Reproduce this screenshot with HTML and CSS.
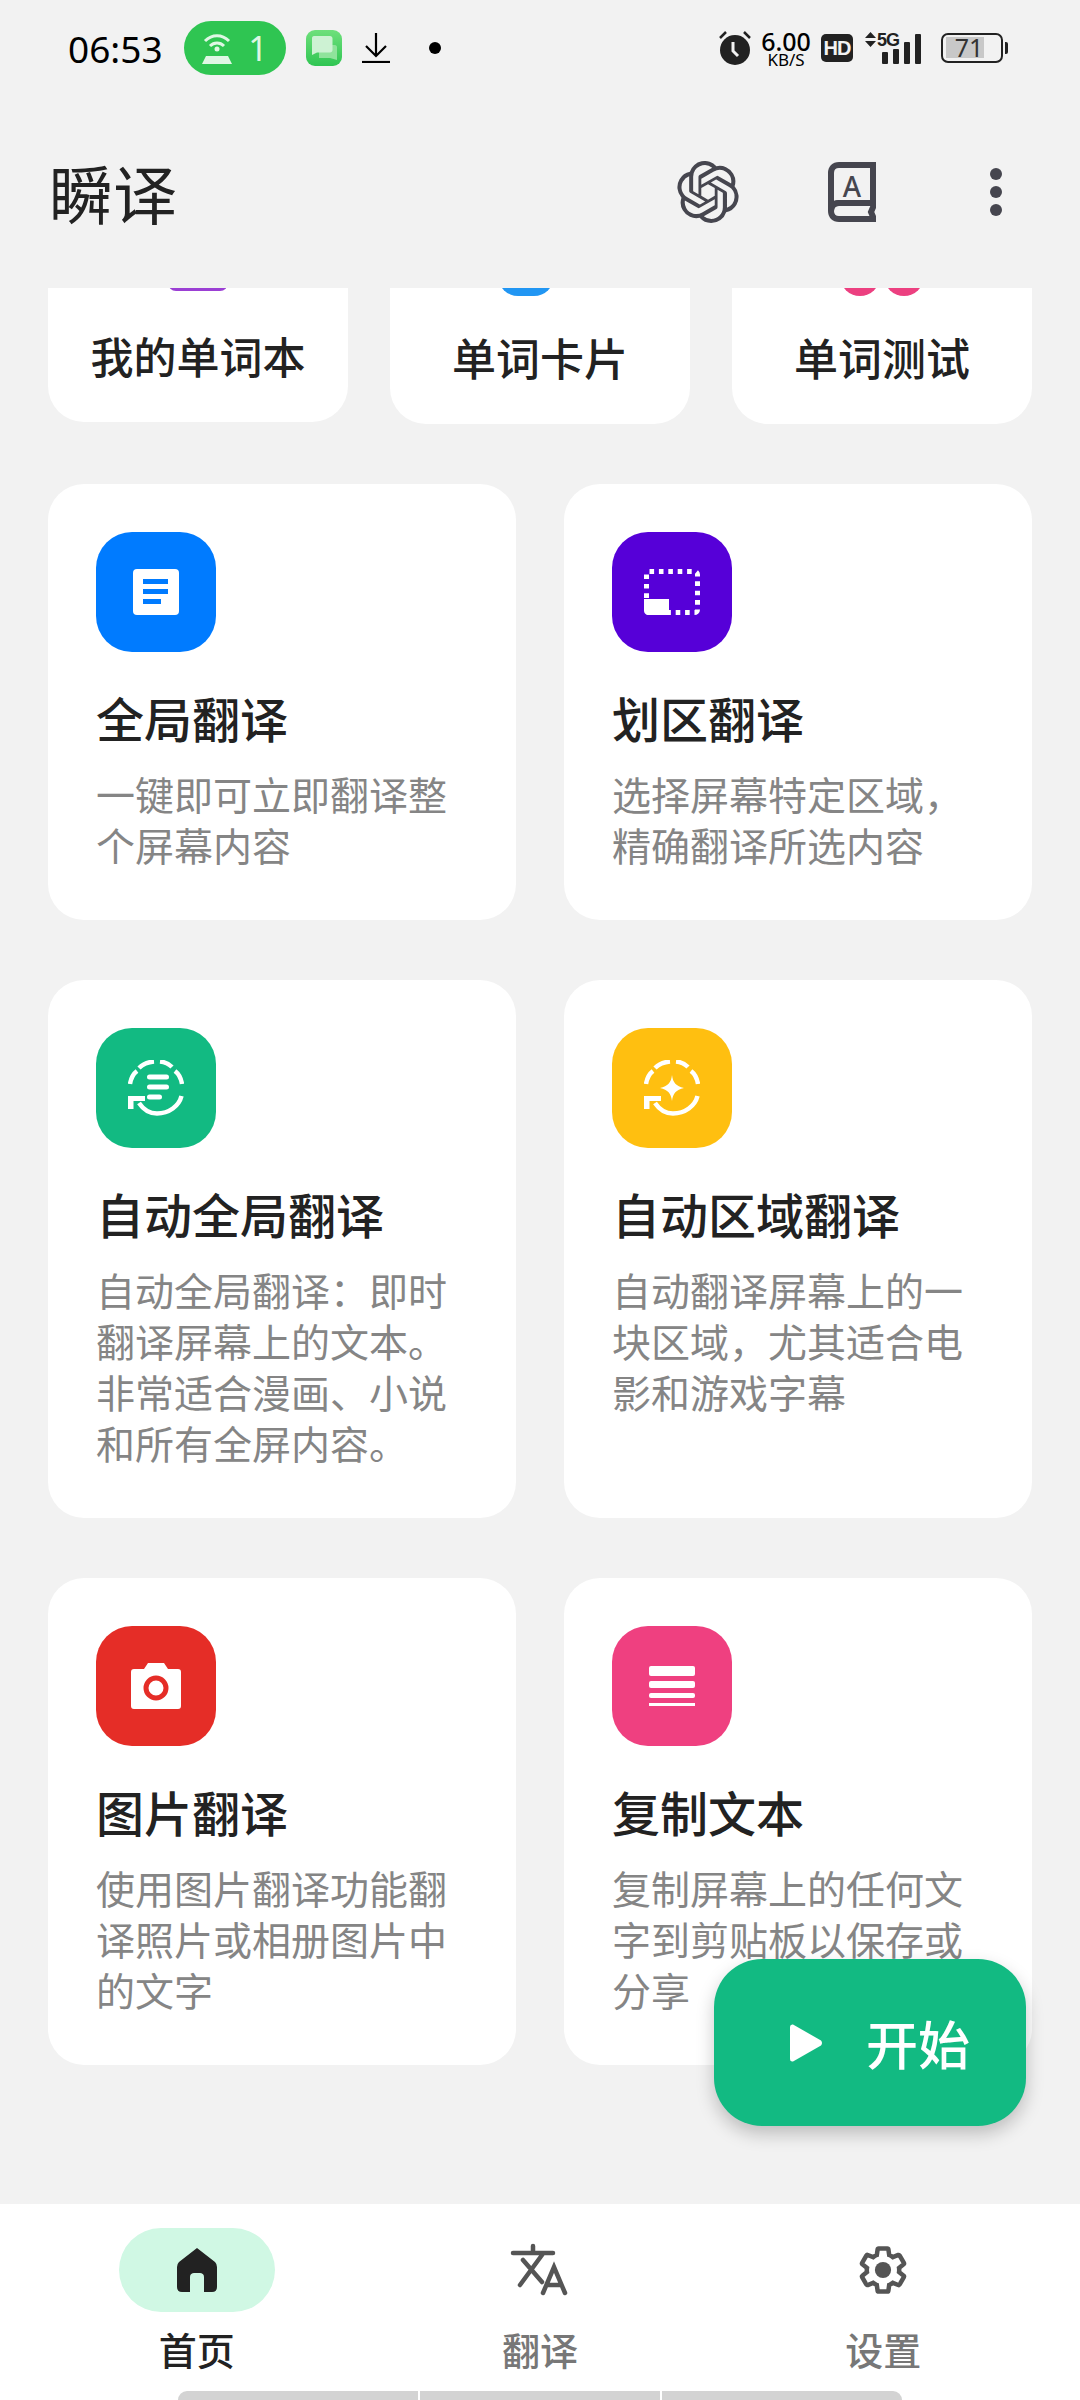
FILE: index.html
```html
<!DOCTYPE html>
<html lang="zh-CN">
<head>
  <meta charset="UTF-8" />
  <title>瞬译</title>
  <link rel="stylesheet" href="styles.css">
</head>
<body>
  <svg class="defs" width="0" height="0">
    <linearGradient id="chatBg" x1="0" y1="0" x2="0" y2="1">
      <stop offset="0" stop-color="#6fe07c"/>
      <stop offset="1" stop-color="#2fc552"/>
    </linearGradient>
    <symbol id="sync" viewBox="0 0 56 56">
      <g fill="none" stroke="#fff" stroke-width="4.500">
        <path d="M2 24C3 18 5 14 9 11"/>
        <path d="M11 8C15 4 20 2 26 1.500"/>
        <path d="M32 1.500C37 2 41 4 44 7"/>
        <path d="M47 11C51 14 53 18 54 24"/>
        <path d="M53.500 36C51 46 41 53.500 29 53.500C21 53.500 15 49 11 43"/>
      </g>
      <path d="M0 36H17V41H5.500V49H0Z" fill="#fff"/>
    </symbol>
  </svg>

  <div class="phone">
    <div class="status">
      <span class="time">06:53</span>
      <span class="hotspot">
        <svg width="30" height="31" viewBox="0 0 30 31"><g fill="none" stroke="#dff7e4" stroke-width="3"><path d="M3 8C10 1 20 1 27 8"/><path d="M8 13C12 9 18 9 22 13"/></g><circle cx="15" cy="16" r="2.500" fill="#dff7e4"/><path d="M0 31L4 23H26L30 31Z" fill="#dff7e4"/></svg>
        <span>1</span>
      </span>
      <svg class="st-chat" width="36" height="36" viewBox="0 0 36 36"><rect width="36" height="36" rx="9" fill="url(#chatBg)"/><path d="M13 15H29C30 15 31 16 31 17V30L24 28H13Z" fill="#8fe39b"/><path d="M8 6H24C25.500 6 26.500 7 26.500 8.500V20C26.500 21.500 25.500 22.500 24 22.500H11L6 25V8.500C6 7 6.500 6 8 6Z" fill="#cdf2d3"/></svg>
      <svg class="st-down" width="28" height="30" viewBox="0 0 28 30"><path d="M14 0V22M4 13L14 23L24 13" fill="none" stroke="#000" stroke-width="2.200"/><path d="M0 29H28" stroke="#000" stroke-width="2.200"/></svg>
      <span class="st-dot"></span>
      <svg class="st-alarm" width="32" height="34" viewBox="0 0 32 34"><circle cx="16" cy="19" r="15" fill="#222"/><path d="M1 7L7 1M31 7L25 1" stroke="#222" stroke-width="2.500"/><path d="M14 11V20L19 25" fill="none" stroke="#f2f2f2" stroke-width="3"/></svg>
      <span class="speed"><b>6.00</b><i>KB/S</i></span>
      <span class="hd">HD</span>
      <span class="signal">
        <svg width="11" height="15" viewBox="0 0 11 15"><path d="M5.500 0L11 6H0ZM0 9H11L5.500 15Z" fill="#222"/></svg>
        <span class="five-g">5G</span>
        <span class="bars"><i class="b1"></i><i class="b2"></i><i class="b3"></i><i class="b4"></i></span>
      </span>
      <span class="battery"><span class="battery-fill"></span><span class="battery-num">71</span></span>
    </div>

    <div class="appbar">
      <h1>瞬译</h1>
      <div class="appbar-actions">
        <span class="action">
          <svg width="62" height="62" viewBox="0 0 24 24" fill="#46464f"><path d="M22.2819 9.8211a5.9847 5.9847 0 0 0-.5157-4.9108 6.0462 6.0462 0 0 0-6.5098-2.9A6.0651 6.0651 0 0 0 4.9807 4.1818a5.9847 5.9847 0 0 0-3.9977 2.9 6.0462 6.0462 0 0 0 .7427 7.0966 5.98 5.98 0 0 0 .511 4.9107 6.051 6.051 0 0 0 6.5146 2.9001A5.9847 5.9847 0 0 0 13.2599 24a6.0557 6.0557 0 0 0 5.7718-4.2058 5.9894 5.9894 0 0 0 3.9977-2.9001 6.0557 6.0557 0 0 0-.7475-7.0729zm-9.022 12.6081a4.4755 4.4755 0 0 1-2.8764-1.0408l.1419-.0804 4.7783-2.7582a.7948.7948 0 0 0 .3927-.6813v-6.7369l2.02 1.1686a.071.071 0 0 1 .038.052v5.5826a4.504 4.504 0 0 1-4.4945 4.4944zm-9.6607-4.1254a4.4708 4.4708 0 0 1-.5346-3.0137l.142.0852 4.783 2.7582a.7712.7712 0 0 0 .7806 0l5.8428-3.3685v2.3324a.0804.0804 0 0 1-.0332.0615L9.74 19.9502a4.4992 4.4992 0 0 1-6.1408-1.6464zM2.3408 7.8956a4.485 4.485 0 0 1 2.3655-1.9728V11.6a.7664.7664 0 0 0 .3879.6765l5.8144 3.3543-2.0201 1.1685a.0757.0757 0 0 1-.071 0l-4.8303-2.7865A4.504 4.504 0 0 1 2.3408 7.872zm16.5963 3.8558L13.1038 8.364 15.1192 7.2a.0757.0757 0 0 1 .071 0l4.8303 2.7913a4.4944 4.4944 0 0 1-.6765 8.1042v-5.6772a.79.79 0 0 0-.407-.667zm2.0107-3.0231l-.142-.0852-4.7735-2.7818a.7759.7759 0 0 0-.7854 0L9.409 9.2297V6.8974a.0662.0662 0 0 1 .0284-.0615l4.8303-2.7866a4.4992 4.4992 0 0 1 6.6802 4.66zM8.3065 12.863l-2.02-1.1638a.0804.0804 0 0 1-.038-.0567V6.0742a4.4992 4.4992 0 0 1 7.3757-3.4537l-.142.0805L8.704 5.459a.7948.7948 0 0 0-.3927.6813zm1.0976-2.3654l2.602-1.4998 2.6069 1.4998v2.9994l-2.5974 1.4997-2.6067-1.4997Z"/></svg>
        </span>
        <span class="action book">
          <svg width="48" height="60" viewBox="0 0 48 60"><path d="M11 3H45V41H11C6 41 3 44 3 49V11C3 6 6 3 11 3Z" fill="none" stroke="#46464f" stroke-width="6"/><path d="M3 49C3 54 6 57 11 57H46L43 50L46 43V41H11C6 41 3 44 3 49Z" fill="none" stroke="#46464f" stroke-width="6"/></svg>
          <span class="book-letter">A</span>
        </span>
        <span class="action kebab"><i></i><i></i><i></i></span>
      </div>
    </div>

    <main class="content">
      <div class="shortcuts">
        <div class="tile tile-short">
          <span class="tile-icon tile-purple"></span>
          <span class="tile-name name-small">我的单词本</span>
        </div>
        <div class="tile">
          <span class="tile-icon tile-blue"></span>
          <span class="tile-name">单词卡片</span>
        </div>
        <div class="tile">
          <span class="tile-icon tile-pink"><i></i><i></i></span>
          <span class="tile-name">单词测试</span>
        </div>
      </div>

      <div class="features">
        <div class="card">
          <span class="badge badge-blue">
            <svg width="46" height="46" viewBox="0 0 46 46"><rect width="46" height="46" rx="4" fill="#fff"/><path d="M10 12.500H35M10 22.500H35M10 32.500H28" stroke="#007bff" stroke-width="5"/></svg>
          </span>
          <h2>全局翻译</h2>
          <p>一键即可立即翻译整个屏幕内容</p>
        </div>
        <div class="card">
          <span class="badge badge-purple">
            <svg width="56" height="46" viewBox="0 0 56 46"><rect x="2.500" y="2.500" width="51" height="41" rx="3" fill="none" stroke="#fff" stroke-width="5" stroke-dasharray="4.600 4.800"/><path d="M0 30H25V46H4C2 46 0 44 0 42Z" fill="#fff"/></svg>
          </span>
          <h2>划区翻译</h2>
          <p>选择屏幕特定区域，精确翻译所选内容</p>
        </div>
        <div class="card">
          <span class="badge badge-green">
            <svg width="56" height="56" viewBox="0 0 56 56"><use href="#sync"/><path d="M21.500 17H38.500M21.500 27H38.500M21.500 37H31.500" stroke="#fff" stroke-width="5" stroke-linecap="round"/></svg>
          </span>
          <h2>自动全局翻译</h2>
          <p>自动全局翻译：即时翻译屏幕上的文本。非常适合漫画、小说和所有全屏内容。</p>
        </div>
        <div class="card">
          <span class="badge badge-yellow">
            <svg width="56" height="56" viewBox="0 0 56 56"><use href="#sync"/><path d="M28 15C29 23 32 26 40 28C32 30 29 33 28 41C27 33 24 30 16 28C24 26 27 23 28 15Z" fill="#fff"/></svg>
          </span>
          <h2>自动区域翻译</h2>
          <p>自动翻译屏幕上的一块区域，尤其适合电影和游戏字幕</p>
        </div>
        <div class="card">
          <span class="badge badge-red">
            <svg width="50" height="46" viewBox="0 0 50 46"><path d="M3 6H13L17 0H33L37 6H47C49 6 50 7 50 9V43C50 45 49 46 47 46H3C1 46 0 45 0 43V9C0 7 1 6 3 6Z" fill="#fff"/><circle cx="25" cy="25" r="10" fill="none" stroke="#e52d27" stroke-width="5"/></svg>
          </span>
          <h2>图片翻译</h2>
          <p>使用图片翻译功能翻译照片或相册图片中的文字</p>
        </div>
        <div class="card">
          <span class="badge badge-pink">
            <svg width="46" height="40" viewBox="0 0 46 40" fill="#fff"><rect width="46" height="10" rx="2"/><rect y="15" width="46" height="7" rx="2"/><rect y="27" width="46" height="5" rx="2"/><rect y="37" width="46" height="3"/></svg>
          </span>
          <h2>复制文本</h2>
          <p>复制屏幕上的任何文字到剪贴板以保存或分享</p>
        </div>
      </div>
    </main>

    <button class="fab">
      <svg width="32" height="38" viewBox="0 0 32 38"><path d="M3 0.500L31 16.500Q33 19 31 21.500L3 37.500Q0 38 0 35V3Q0 0 3 0.500Z" fill="#fff"/></svg>
      <span>开始</span>
    </button>

    <nav class="tabbar">
      <div class="tab tab-active">
        <span class="tab-icon">
          <svg width="40" height="44" viewBox="0 0 40 44"><path d="M20 0L38 14Q40 16 40 19V39Q40 44 35 44H27V29C27 26 25 25 23 25H17C15 25 13 26 13 29V44H5Q0 44 0 39V19Q0 16 2 14Z" fill="#222"/></svg>
        </span>
        <span class="tab-label">首页</span>
      </div>
      <div class="tab">
        <span class="tab-icon">
          <svg width="60" height="54" viewBox="0 0 60 54" fill="none" stroke="#555" stroke-width="4.500" stroke-linecap="round"><path d="M3 10H43M23 3V10M13 17L32 39M32 12L10 42M33 50L44 24L55 50M37 42H51"/></svg>
        </span>
        <span class="tab-label">翻译</span>
      </div>
      <div class="tab">
        <span class="tab-icon">
          <svg width="54" height="54" viewBox="0 0 24 24" fill="#555"><path d="M19.140 12.940c.04-.3.06-.61.06-.94 0-.32-.02-.64-.07-.94l2.030-1.580c.18-.14.23-.41.12-.61l-1.920-3.320c-.12-.22-.37-.29-.59-.22l-2.390.96c-.5-.38-1.030-.7-1.620-.94l-.36-2.540c-.04-.24-.24-.41-.48-.41h-3.840c-.24 0-.43.17-.47.41l-.36 2.540c-.59.24-1.130.57-1.620.94l-2.390-.96c-.22-.08-.47 0-.59.22L2.740 8.870c-.12.21-.08.47.12.61l2.030 1.580c-.05.3-.09.63-.09.94s.02.64.07.94l-2.030 1.580c-.18.14-.23.41-.12.61l1.920 3.320c.12.22.37.29.59.22l2.390-.96c.5.38 1.030.7 1.620.94l.36 2.540c.05.24.24.41.48.41h3.840c.24 0 .44-.17.47-.41l.36-2.540c.59-.24 1.130-.56 1.620-.94l2.390.96c.22.08.47 0 .59-.22l1.920-3.320c.12-.22.07-.47-.12-.61l-2.010-1.580z" fill="none" stroke="#555" stroke-width="2"/><circle cx="12" cy="12" r="3.600"/></svg>
        </span>
        <span class="tab-label">设置</span>
      </div>
      <div class="home-bar"><i></i><i></i><i></i></div>
    </nav>
  </div>
</body>
</html>
```

FILE: styles.css
```css
* {
  box-sizing: border-box;
}
body {
  margin: 0;
  font-family: "Noto Sans CJK SC", "Noto Sans", sans-serif;
  background: #f2f2f2;
}
.defs {
  position: absolute;
}
.phone {
  position: relative;
  width: 1080px;
  height: 2400px;
  display: flex;
  flex-direction: column;
  overflow: hidden;
  background: #f2f2f2;
}

/* status bar */
.status {
  height: 96px;
  flex: none;
  display: flex;
  align-items: center;
  padding-left: 68px;
  color: #000;
}
.time {
  width: 116px;
  font-family: "Noto Sans", sans-serif;
  font-size: 37px;
}
.hotspot {
  width: 102px;
  height: 54px;
  border-radius: 27px;
  background: #2fc552;
  display: flex;
  align-items: center;
  justify-content: center;
  gap: 16px;
  color: #dff7e4;
  font-family: "Noto Sans", sans-serif;
  font-size: 34px;
}
.st-chat {
  margin-left: 20px;
}
.st-down {
  margin-left: 20px;
}
.st-dot {
  width: 12px;
  height: 12px;
  border-radius: 50%;
  background: #000;
  margin-left: 39px;
}
.st-alarm {
  margin-left: 278px;
}
.speed {
  width: 52px;
  margin-left: 9px;
  display: flex;
  flex-direction: column;
  align-items: center;
  font-family: "Noto Sans", sans-serif;
}
.speed b {
  font-weight: 500;
  font-size: 25px;
  line-height: 22px;
}
.speed i {
  font-style: normal;
  font-size: 17px;
  line-height: 15px;
}
.hd {
  width: 32px;
  height: 28px;
  margin-left: 9px;
  border-radius: 5px;
  background: #222;
  color: #f2f2f2;
  font-family: "Liberation Sans", sans-serif;
  font-weight: 700;
  font-size: 20px;
  line-height: 28px;
  text-align: center;
  letter-spacing: -1px;
}
.signal {
  position: relative;
  width: 61px;
  height: 32px;
  margin-left: 12px;
}
.signal svg {
  position: absolute;
  left: 0;
  top: 0;
}
.five-g {
  position: absolute;
  left: 12px;
  top: -1px;
  font-family: "Liberation Sans", sans-serif;
  font-weight: 700;
  font-size: 18px;
  line-height: 18px;
  letter-spacing: -1px;
  color: #222;
}
.bars {
  position: absolute;
  left: 17px;
  bottom: 0;
  display: flex;
  align-items: flex-end;
  gap: 5px;
}
.bars i {
  width: 6px;
  background: #222;
  border-radius: 1px;
}
.b1 {
  height: 12px;
}
.b2 {
  height: 15px;
}
.b3 {
  height: 22px;
}
.b4 {
  height: 30px;
}
.battery {
  position: relative;
  width: 62px;
  height: 30px;
  margin-left: 15px;
  border: 2.500px solid #222;
  border-radius: 7px;
  color: #333;
  font-family: "Noto Sans", sans-serif;
  font-size: 25px;
  line-height: 25px;
  text-align: center;
}
.battery::after {
  content: "";
  position: absolute;
  right: -7px;
  top: 7px;
  width: 3px;
  height: 12px;
  background: #222;
  border-radius: 0 2px 2px 0;
}
.battery-fill {
  position: absolute;
  left: 3px;
  top: 2px;
  width: 38px;
  height: 21px;
  background: #c8c8c8;
}
.battery-num {
  position: relative;
  display: block;
  margin-right: 6px;
}

/* app bar */
.appbar {
  height: 192px;
  flex: none;
  display: flex;
  align-items: center;
  justify-content: space-between;
  padding: 0 12px 0 49px;
}
.appbar h1 {
  margin: 0 0 2px;
  font-size: 64px;
  font-weight: 400;
  color: #222;
}
.appbar-actions {
  display: flex;
}
.action {
  position: relative;
  width: 144px;
  height: 64px;
  display: flex;
  align-items: center;
  justify-content: center;
}
.book-letter {
  position: absolute;
  left: 60px;
  top: 9px;
  width: 24px;
  text-align: center;
  font-family: "Noto Sans", sans-serif;
  font-weight: 500;
  font-size: 28px;
  line-height: 34px;
  color: #46464f;
}
.kebab {
  flex-direction: column;
  gap: 6px;
}
.kebab i {
  width: 12px;
  height: 12px;
  border-radius: 50%;
  background: #46464f;
}

/* scrolled list */
.content {
  flex: 1;
  min-height: 0;
  overflow: hidden;
  padding: 0 48px;
}
.shortcuts {
  margin-top: -60px;
  display: grid;
  grid-template-columns: repeat(3, 300px);
  column-gap: 42px;
  align-items: start;
}
.tile {
  height: 196px;
  border-radius: 36px;
  background: #fff;
  display: flex;
  flex-direction: column;
  align-items: center;
}
.tile-short {
  height: 194px;
}
.tile-icon {
  display: flex;
  justify-content: center;
  align-items: flex-end;
  gap: 4px;
  height: 68px;
}
.tile-purple {
  width: 60px;
  height: 63px;
  border-radius: 8px;
  background: #9b3fd4;
}
.tile-blue {
  width: 56px;
  margin-right: 28px;
  border-radius: 20px;
  background: #2196f3;
}
.tile-pink i {
  width: 40px;
  height: 40px;
  border-radius: 50%;
  background: #ec4080;
}
.tile-name {
  margin-top: 29px;
  font-size: 44px;
  font-weight: 500;
  line-height: 64px;
  color: #222;
}
.tile-short .tile-name {
  margin-top: 32px;
}
.name-small {
  font-size: 43px;
}
.features {
  margin-top: 60px;
  display: grid;
  grid-template-columns: 468px 468px;
  gap: 60px 48px;
}
.card {
  padding: 48px 48px 50px;
  border-radius: 36px;
  background: #fff;
}
.badge {
  width: 120px;
  height: 120px;
  border-radius: 36px;
  display: flex;
  align-items: center;
  justify-content: center;
}
.badge-blue {
  background: #007bff;
}
.badge-purple {
  background: #5600d8;
}
.badge-green {
  background: #12ba82;
}
.badge-yellow {
  background: #ffbf10;
}
.badge-red {
  background: #e52d27;
}
.badge-pink {
  background: #ef4080;
}
.card h2 {
  margin: 33px 0 19px;
  font-size: 48px;
  font-weight: 500;
  line-height: 64px;
  color: #222;
}
.card p {
  margin: 0;
  font-size: 39px;
  line-height: 51px;
  color: #858585;
}

/* start button */
.fab {
  position: absolute;
  left: 714px;
  top: 1959px;
  width: 312px;
  height: 167px;
  border: none;
  border-radius: 48px;
  background: #12ba82;
  box-shadow: 0 8px 18px rgba(0, 0, 0, 0.22);
  color: #fff;
  font-family: inherit;
  font-size: 52px;
  font-weight: 500;
  display: flex;
  align-items: center;
  justify-content: center;
  gap: 44px;
  padding: 0 0 0 20px;
}

/* bottom nav */
.tabbar {
  position: relative;
  height: 196px;
  flex: none;
  display: flex;
  padding: 24px 25px 0;
  background: #fff;
}
.tab {
  flex: 1;
  display: flex;
  flex-direction: column;
  align-items: center;
}
.tab-icon {
  width: 156px;
  height: 84px;
  border-radius: 42px;
  display: flex;
  align-items: center;
  justify-content: center;
}
.tab-active .tab-icon {
  background: #d0f8e4;
}
.tab-label {
  margin-top: 9px;
  font-size: 38px;
  line-height: 56px;
  font-weight: 500;
  color: #777;
}
.tab-active .tab-label {
  color: #222;
}
.home-bar {
  position: absolute;
  left: 178px;
  bottom: 0;
  width: 724px;
  height: 9px;
  display: flex;
  gap: 2px;
}
.home-bar i {
  flex: 1;
  background: #d3d3d3;
}
.home-bar i:first-child {
  border-radius: 9px 0 0 0;
}
.home-bar i:last-child {
  border-radius: 0 9px 0 0;
}
```
